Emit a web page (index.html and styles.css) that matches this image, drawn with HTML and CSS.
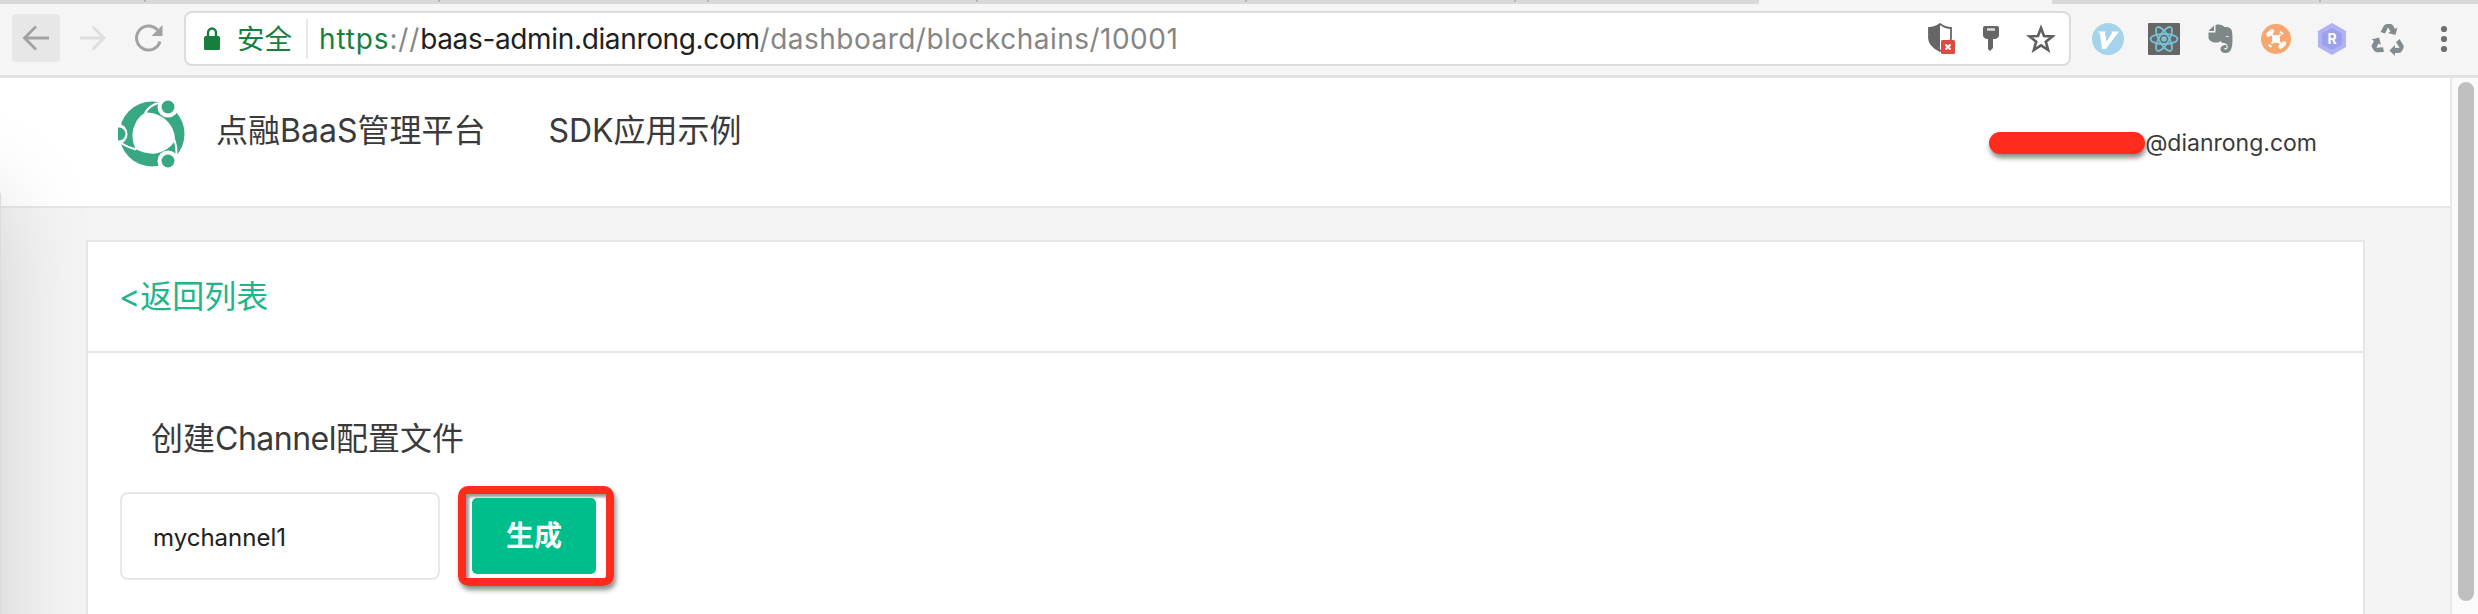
FILE: index.html
```html
<!DOCTYPE html>
<html lang="zh">
<head>
<meta charset="utf-8">
<title>点融BaaS管理平台</title>
<link rel="stylesheet" href="styles.css">
</head>
<body>
<div class="tabs"><i class="tab-first"></i><i class="tab-second"></i><i></i><i></i><i></i><i></i><i class="tab-last"></i><b class="tab-active"></b><i></i></div>
<div class="toolbar">
  <div class="nav nav-back"><svg width="28" height="26" viewBox="0 0 28 26"><path d="M27 13H3M14 1.500 2.500 13 14 24.500" fill="none" stroke="#a2a2a2" stroke-width="2.800"/></svg></div>
  <div class="nav nav-fwd"><svg width="28" height="26" viewBox="0 0 28 26"><path d="M1 13h24M13.500 1.500 25 13 13.500 24.500" fill="none" stroke="#dedede" stroke-width="2.800"/></svg></div>
  <div class="nav nav-reload"><svg width="30" height="30" viewBox="0 0 30 30"><path d="M26 18.500A12 12 0 1 1 23.500 7" fill="none" stroke="#a2a2a2" stroke-width="3"/><path d="M28.500 2v11H17.500z" fill="#a2a2a2"/></svg></div>
  <div class="address">
    <svg class="lock" width="18" height="24" viewBox="0 0 18 24"><path d="M5 10V6a4 4.500 0 0 1 8 0v4" fill="none" stroke="#14803c" stroke-width="2.400"/><rect x="1" y="9" width="16" height="14" rx="1.500" fill="#14803c"/></svg>
    <span class="secure">安全</span>
    <span class="url"><span class="scheme">https</span><span class="slashes">://</span>baas-admin.dianrong.com<span class="path">/dashboard/blockchains/10001</span></span>
    <div class="actions">
      <svg width="28" height="32" viewBox="0 0 28 32"><path d="M12 1c4 3 7 4 11 4v10c0 6-5 10-11 13C6 25 1 21 1 15V5c4 0 7-1 11-4z" fill="#fff" stroke="#666" stroke-width="1.800"/><path d="M12 1v27C6 25 1 21 1 15V5c4 0 7-1 11-4z" fill="#666"/><rect x="13" y="17" width="14" height="14" rx="1.500" fill="#dd4b3e"/><path d="m17.500 21.500 5 5m0-5-5 5" stroke="#fff" stroke-width="2"/></svg>
      <svg width="18" height="26" viewBox="0 0 18 26"><path d="M3 0h12q2 0 2 2v7q0 3-4 4h-2v9l-3 3-2-2V13H5q-4-1-4-4V2q0-2 2-2z" fill="#666"/><path d="M5 3.500h8" stroke="#ddd" stroke-width="2.500"/></svg>
      <svg width="30" height="30" viewBox="0 0 30 30"><path d="m15 4 3 8 8.500.4-6.700 5.300 2.400 8.300L15 21.300 7.800 26l2.400-8.300L3.500 12.400 12 12z" fill="none" stroke="#5e5e5e" stroke-width="2.600"/></svg>
    </div>
  </div>
  <div class="exts">
    <svg width="32" height="32" viewBox="0 0 32 32"><circle cx="16" cy="16" r="16" fill="#a5d3ec"/><path d="M6 8.500h8l-1 2 1.500 8L20 10l-.5-1.500H27L14 26h-4L8 11z" fill="#fff"/></svg>
    <svg width="32" height="32" viewBox="0 0 32 32"><rect width="32" height="32" rx="1" fill="#666"/><g fill="none" stroke="#76c1d6" stroke-width="1.800"><ellipse cx="16" cy="16" rx="13.500" ry="5"/><ellipse cx="16" cy="16" rx="13.500" ry="5" transform="rotate(60 16 16)"/><ellipse cx="16" cy="16" rx="13.500" ry="5" transform="rotate(120 16 16)"/></g><circle cx="16" cy="16" r="2.800" fill="#76c1d6"/></svg>
    <svg width="32" height="32" viewBox="0 0 32 32"><path d="M4.500 8 10 2.500V8z" fill="#7e8888"/><path d="M11.500 2c4-1 7 0 9 2 7 0 8 2 8 12 0 10-2 14-7 14-6 0-7-7-1-8h2v3h-2c-1 2 2 2 3 0 1-3-1-4.500-4-5-2 0-2-1-3-2-3 3-11 1.500-12-3V9.500h7z" fill="#7e8888"/><path d="M21.500 14q2-2.500 3.500 0z" fill="#e4e7e7"/></svg>
    <svg width="32" height="32" viewBox="0 0 32 32"><circle cx="16" cy="16" r="15" fill="#f6a66e"/><path d="m8.500 11.500 3.500-3M20.500 23.500l3.500-3" stroke="#fff" stroke-width="4.500" stroke-linecap="round"/><path d="m8.500 21.500 3 2.500M20 8.500l3 2.500M11.500 11.500l9 9M20.500 11.500l-9 9" stroke="#fff" stroke-width="1.800"/><circle cx="16" cy="16" r="4" fill="#fff"/></svg>
    <svg width="32" height="32" viewBox="0 0 32 32"><path d="m16 0 14 8v16l-14 8-14-8V8z" fill="#b0b2f2"/><path d="m16 5 10 5.500v11L16 27 6 21.500v-11z" fill="#9da0ec"/><text x="16" y="21" text-anchor="middle" class="hex-letter">R</text></svg>
    <svg width="32" height="32" viewBox="0 0 32 32"><g fill="#848b8f"><path id="arrow" d="M8.500 9 12 2.500q1-1.500 3-1.500h4q1 0 2 1.500l2 3.500 2.500-1.500-2 7.500-7.500-2 2.500-1.500-2.500-4-3 6z"/><use href="#arrow" transform="rotate(120 16 18)"/><use href="#arrow" transform="rotate(240 16 18)"/></g></svg>
    <svg class="menu" width="8" height="28" viewBox="0 0 8 28"><g fill="#707070"><circle cx="4" cy="4" r="3.100"/><circle cx="4" cy="14" r="3.100"/><circle cx="4" cy="24" r="3.100"/></g></svg>
  </div>
</div>
<div class="viewport">
  <div class="page">
    <header class="header">
      <svg class="logo" width="67" height="68" viewBox="0 0 67 68"><circle cx="34" cy="34" r="32.500" fill="#38a883"/><path d="M28 12.500Q45 13 53 26Q57 32 57 41Q50 51 38 53.500Q28 54.500 17.500 49Q11 35 18 22Q22 15 28 12.500Z" fill="#fff"/><path d="M40 3Q31 6 27 13M56.500 40Q59 47 58.500 55M18 49.500Q9 47 3 43" stroke="#fff" stroke-width="2" fill="none"/><circle cx="50" cy="7" r="10.500" fill="#fff"/><circle cx="50" cy="7" r="6.500" fill="#38a883"/><circle cx="50" cy="61" r="10.500" fill="#fff"/><circle cx="50" cy="61" r="6.500" fill="#38a883"/><path d="M-1 23.500a10.500 10.500 0 0 1 0 21z" fill="#fff"/><path d="M0 27.500h1a6.500 6.500 0 0 1 0 13H0z" fill="#38a883"/></svg>
      <span class="brand">点融BaaS管理平台</span>
      <span class="demo">SDK应用示例</span>
      <div class="user"><span class="redacted"></span><span class="mail">@dianrong.com</span></div>
    </header>
    <main class="card">
      <div class="card-top"><a class="back">&lt;返回列表</a></div>
      <div class="card-body">
        <h2 class="title">创建<span class="title-latin">Channel</span>配置文件</h2>
        <div class="row">
          <div class="field">mychannel1</div>
          <div class="highlight"><div class="button">生成</div></div>
        </div>
      </div>
    </main>
    <div class="edge-clip"><div class="edge-shadow"></div></div>
  </div>
  <div class="scrollbar"><div class="thumb"></div></div>
</div>
</body>
</html>
```
FILE: styles.css
```css
* { box-sizing: border-box; }
body {
  margin: 0; width: 2478px; height: 614px; overflow: hidden;
  display: flex; flex-direction: column; background: #fff;
  font-family: "Inter", "Noto Sans CJK SC", sans-serif; color: #3a3a3a;
}
svg { display: block; flex: none; overflow: visible; }
.tabs { height: 4px; flex: none; background: #d9d9d9; display: flex; overflow: hidden; }
.tabs i { width: 269px; height: 2px; border-right: 2px solid #b5b5b5; flex: none; }
.tabs .tab-first { width: 146px; }
.tabs .tab-second { width: 294px; }
.tabs .tab-last { width: 243px; border: 0; }
.tab-active { width: 293px; flex: none; background: #f5f5f5; }
.toolbar {
  height: 74px; flex: none; background: #f5f5f5; border-bottom: 3px solid #e2e2e2;
  display: flex; align-items: flex-start; padding: 7px 0 0 12px;
}
.nav { height: 48px; margin-top: 3px; display: flex; align-items: center; justify-content: center; flex: none; }
.nav-back { width: 48px; background: #e7e7e7; border-radius: 4px; }
.nav-fwd { width: 28px; margin-left: 19px; }
.nav-reload { width: 30px; margin-left: 27px; }
.address {
  width: 1887px; height: 55px; margin-left: 20px; padding: 0 13px 0 17px; flex: none;
  border: 2px solid #dcdcdc; border-radius: 8px; background: #fff; display: flex; align-items: center;
}
.secure { margin-left: 16px; padding-right: 14px; font-size: 27.500px; line-height: 40px; color: #16803e; border-right: 2px solid #e9e9e9; }
.url { margin-left: 11px; font-size: 28px; letter-spacing: -.35px; color: #202020; white-space: nowrap; }
.scheme { color: #16803e; letter-spacing: .85px; }
.slashes { color: #858585; letter-spacing: .85px; }
.path { color: #858585; letter-spacing: .48px; }
.actions { margin-left: auto; display: flex; align-items: center; gap: 26px; }
.exts { display: flex; align-items: center; gap: 24px; height: 55px; margin-left: 21px; }
.menu { margin-left: 12px; }
.hex-letter { font: 700 14px "Inter", sans-serif; fill: #fff; }
.viewport { flex: 1; min-height: 0; display: flex; }
.page {
  width: 2452px; flex: none; background: #f4f4f4; border-right: 2px solid #e8e8e8;
  display: flex; flex-direction: column; position: relative;
}
.header {
  height: 130px; flex: none; border-bottom: 2px solid #e6e6e6; background: #fff;
  display: flex; align-items: flex-start; padding: 22px 133px 0 118px;
}
.brand, .demo { font-size: 32px; line-height: 46px; margin-top: 8px; white-space: nowrap; }
.brand { margin-left: 31px; }
.demo { margin-left: 63px; }
.user { margin-left: auto; margin-top: 27px; display: flex; align-items: center; }
.redacted { width: 156px; height: 22px; border-radius: 12px; background: #ff2b1c; box-shadow: 1px 4px 5px rgba(0,0,0,.45); }
.mail { font-size: 23px; line-height: 32px; }
.card { width: 2279px; flex: 1; min-height: 0; margin: 32px 0 0 86px; border: 2px solid #e6e6e6; border-bottom: 0; background: #fff; }
.card-top { height: 111px; border-bottom: 2px solid #e6e6e6; padding: 32px 31px; }
.back { display: block; font-size: 32px; line-height: 46px; color: #21b588; }
.card-body { padding: 63px 32px 0; }
.title { margin: 0 0 0 31px; font-size: 32px; line-height: 46px; font-weight: 400; }
.title-latin { letter-spacing: -.5px; }
.row { display: flex; align-items: flex-start; margin-top: 24px; }
.field { width: 320px; height: 88px; margin-top: 6px; border: 2px solid #e8e8e8; border-radius: 8px; padding-left: 31px; font-size: 24px; line-height: 87px; color: #202020; }
.highlight { width: 156px; height: 100px; margin-left: 18px; padding: 4px 6px; border: 8px solid #ff2b1c; border-radius: 10px; box-shadow: 2px 4px 5px rgba(0,0,0,.45), inset 3px 3px 3px rgba(0,0,0,.4); }
.button { width: 124px; height: 76px; background: #00bd8c; color: #fff; border-radius: 5px; font-size: 28px; font-weight: 700; line-height: 77px; text-align: center; }
/* Soft shadow cast by a window beyond the left edge */
.edge-clip { position: absolute; inset: 0 auto 0 0; width: 86px; overflow: hidden; pointer-events: none; }
.edge-shadow { position: absolute; left: -300px; top: 115px; width: 301px; height: 700px; box-shadow: 0 0 90px rgba(0,0,0,.15); background: #dcdcdc; }
.scrollbar { width: 26px; background: #fafafa; padding: 4px 6px; }
.thumb { width: 16px; height: 519px; background: #c0c0c0; border-radius: 8px; }
```
